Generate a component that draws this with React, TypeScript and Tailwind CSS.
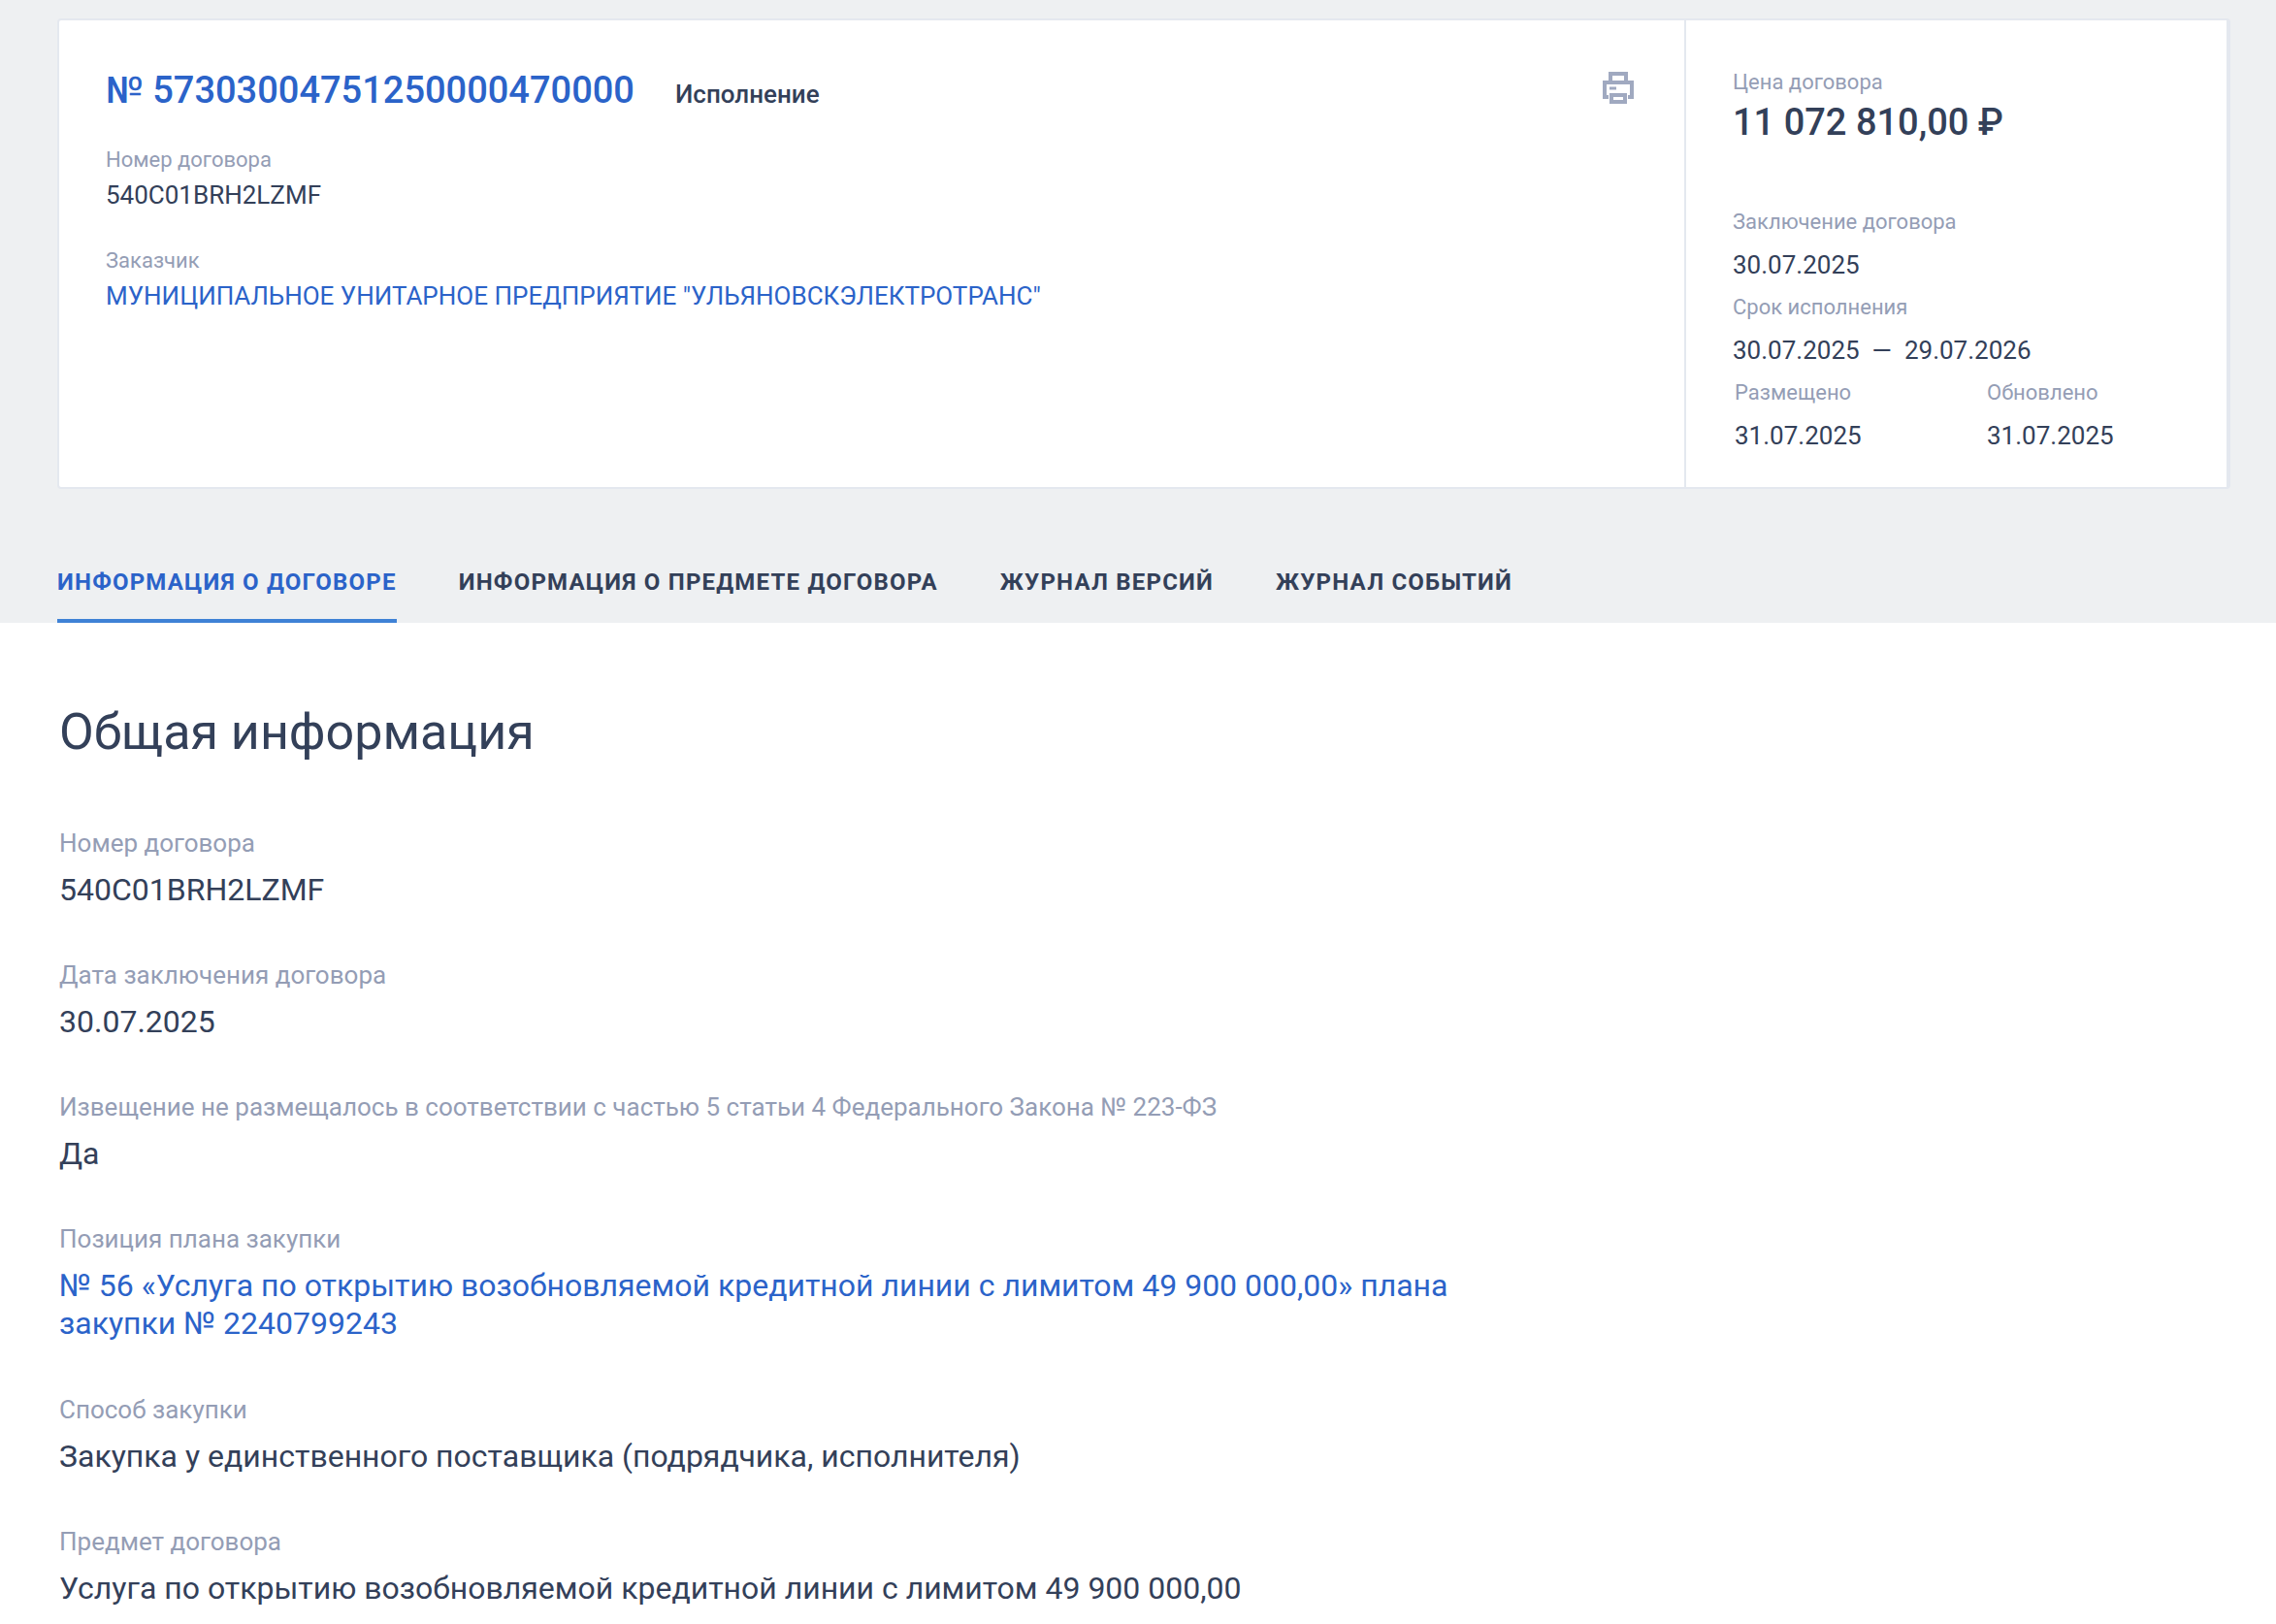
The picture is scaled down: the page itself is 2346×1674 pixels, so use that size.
const font = { fontFamily: "Roboto, sans-serif" };

function Printer() {
  return (
    <svg width="32" height="33" viewBox="0 0 32 33" fill="none" stroke="#a0a9c0" strokeWidth="4" className="mt-[4px]">
      <path d="M8 9V2H24V9" />
      <path d="M6 26H2V11H30V26H26" />
      <path d="M9 24H23V31H9z" />
      <path d="M7 17h7" strokeWidth="3" />
    </svg>
  );
}

function Small({ label, value }: { label: string; value: React.ReactNode }) {
  return (
    <div className="flex flex-col">
      <div className="text-[22px] leading-[30px] text-[#949db5]">{label}</div>
      <div className="text-[26px] leading-[30px] mt-[14px] text-[#334059]">{value}</div>
    </div>
  );
}

function Field({ label, children, link }: { label: string; children: React.ReactNode; link?: boolean }) {
  return (
    <div className={link ? "mb-[50px]" : "mb-[49px]"}>
      <div className="text-[26px] leading-[39px] text-[#949db5]">{label}</div>
      <div className={`text-[32px] leading-[39px] mt-[9px] max-w-[1460px] ${link ? "text-[#2b63c9]" : "text-[#334059]"}`}>{children}</div>
    </div>
  );
}

export default function App() {
  return (
    <div className="h-[1674px] overflow-hidden bg-white" style={font}>
      <div className="bg-[#eef0f2] px-[60px] pt-[19px]">
        <div className="flex h-[485px] w-[2240px] ml-[-1px] bg-white border-t-2 border-b-2 border-l-2 border-r-4 border-[#e4e8ef] rounded-[4px]">
          <div className="flex-1 border-r-2 border-[#e4e8ef] pl-[48px] pr-[52px] pt-[49px]">
            <div className="flex items-start justify-between h-[48px]">
              <div className="flex items-start">
                <span className="text-[38px] leading-[46px] font-medium text-[#2b63c9]">№ 57303004751250000470000</span>
                <span className="ml-[42px] mt-[9px] text-[26px] leading-[36px] font-medium text-[#334059]">Исполнение</span>
              </div>
              <Printer />
            </div>
            <div className="mt-[32px] text-[22px] leading-[30px] text-[#949db5]">Номер договора</div>
            <div className="mt-[6px] text-[26px] leading-[30px] text-[#334059]">540C01BRH2LZMF</div>
            <div className="mt-[38px] text-[22px] leading-[30px] text-[#949db5]">Заказчик</div>
            <div className="mt-[6px] text-[26px] leading-[30px] text-[#2b63c9]">МУНИЦИПАЛЬНОЕ УНИТАРНОЕ ПРЕДПРИЯТИЕ "УЛЬЯНОВСКЭЛЕКТРОТРАНС"</div>
          </div>
          <div className="w-[557px] pl-[48px] pt-[49px]">
            <div className="text-[22px] leading-[30px] text-[#949db5]">Цена договора</div>
            <div className="text-[38px] leading-[48px] font-medium text-[#334059] mt-[2px]">11 072 810,00 ₽</div>
            <div className="mt-[64px] flex flex-col gap-[14px]">
              <Small label="Заключение договора" value="30.07.2025" />
              <Small label="Срок исполнения" value={<>30.07.2025<span className="mx-[13px]">—</span>29.07.2026</>} />
              <div className="flex pl-[2px]">
                <div className="w-[260px]"><Small label="Размещено" value="31.07.2025" /></div>
                <Small label="Обновлено" value="31.07.2025" />
              </div>
            </div>
          </div>
        </div>
        <div className="flex gap-[64px] mt-[53px] ml-[-1px] h-[85px]">
          <div className="h-full border-b-4 border-[#3f82d6] pt-[25px] text-[24px] leading-[36px] font-bold tracking-[1.2px] text-[#2b63c9]">ИНФОРМАЦИЯ О ДОГОВОРЕ</div>
          <div className="pt-[25px] text-[24px] leading-[36px] font-bold tracking-[1.2px] text-[#334059]">ИНФОРМАЦИЯ О ПРЕДМЕТЕ ДОГОВОРА</div>
          <div className="pt-[25px] text-[24px] leading-[36px] font-bold tracking-[1.2px] text-[#334059]">ЖУРНАЛ ВЕРСИЙ</div>
          <div className="pt-[25px] text-[24px] leading-[36px] font-bold tracking-[1.2px] text-[#334059]">ЖУРНАЛ СОБЫТИЙ</div>
        </div>
      </div>
      <div className="px-[61px] pt-[81px]">
        <h2 className="text-[52px] leading-[64px] text-[#334059] mb-[63px]">Общая информация</h2>
        <Field label="Номер договора">540C01BRH2LZMF</Field>
        <Field label="Дата заключения договора">30.07.2025</Field>
        <Field label="Извещение не размещалось в соответствии с частью 5 статьи 4 Федерального Закона № 223-ФЗ">Да</Field>
        <Field label="Позиция плана закупки" link>№ 56 «Услуга по открытию возобновляемой кредитной линии с лимитом 49 900 000,00» плана закупки № 2240799243</Field>
        <Field label="Способ закупки">Закупка у единственного поставщика (подрядчика, исполнителя)</Field>
        <Field label="Предмет договора">Услуга по открытию возобновляемой кредитной линии с лимитом 49 900 000,00</Field>
      </div>
    </div>
  );
}
